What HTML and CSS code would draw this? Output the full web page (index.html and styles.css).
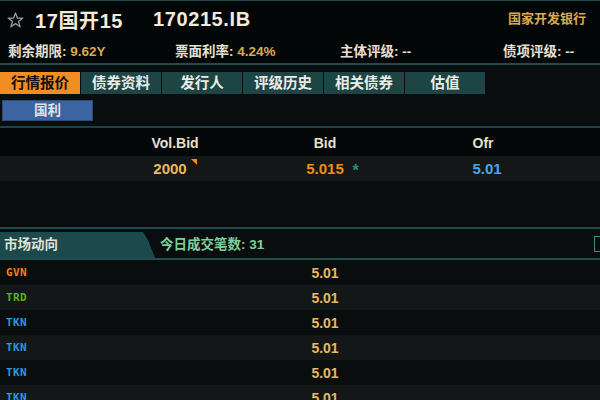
FILE: index.html
```html
<!DOCTYPE html>
<html lang="zh-CN">
<head>
    <meta charset="UTF-8">
    <title>17国开15</title>
    <link rel="stylesheet" href="styles.css">
</head>
<body>
    <div class="page">
        <!-- 债券信息头 -->
        <header class="bond-header">
            <div class="title-row">
                <svg class="star" width="17" height="16" viewBox="0 0 17 16">
                    <path d="M8.5 1 L10.4 6 L15.8 6.1 L11.5 9.4 L13.1 14.8 L8.5 11.6 L3.9 14.8 L5.5 9.4 L1.2 6.1 L6.6 6 Z" fill="none" stroke="#9a9a9a" stroke-width="1.3" stroke-linejoin="round"/>
                </svg>
                <span class="bond-name">17国开15</span>
                <span class="bond-code">170215.IB</span>
                <span class="issuer">国家开发银行</span>
            </div>
            <div class="info-row">
                <span class="info info-1">剩余期限: <b class="gold">9.62Y</b></span>
                <span class="info info-2">票面利率: <b class="gold">4.24%</b></span>
                <span class="info info-3">主体评级: --</span>
                <span class="info info-4">债项评级: --</span>
            </div>
        </header>

        <!-- 标签页 -->
        <nav class="tabs-area">
            <div class="tabs">
                <div class="tab active">行情报价</div>
                <div class="tab">债券资料</div>
                <div class="tab">发行人</div>
                <div class="tab">评级历史</div>
                <div class="tab">相关债券</div>
                <div class="tab">估值</div>
            </div>
            <div class="subtabs">
                <div class="subtab">国利</div>
            </div>
        </nav>

        <!-- 报价表 -->
        <section class="quote">
            <div class="quote-head">
                <span></span>
                <span class="col">Vol.Bid</span>
                <span class="col">Bid</span>
                <span class="col">Ofr</span>
            </div>
            <div class="quote-row">
                <span></span>
                <span class="col"><span class="vol">2000<i class="corner"></i></span></span>
                <span class="col"><span class="bid">5.015<i class="asterisk">*</i></span></span>
                <span class="col ofr">5.01</span>
            </div>
        </section>

        <!-- 市场动向 -->
        <section class="market">
            <div class="market-head">
                <div class="market-tab">市场动向</div>
                <div class="deal-count">今日成交笔数: 31</div>
                <div class="check"></div>
            </div>
            <div class="market-list" id="marketList"></div>
        </section>
    </div>

    <script>
        // 成交记录
        const trades = [
            { broker: "GVN", price: "5.01" },
            { broker: "TRD", price: "5.01" },
            { broker: "TKN", price: "5.01" },
            { broker: "TKN", price: "5.01" },
            { broker: "TKN", price: "5.01" },
            { broker: "TKN", price: "5.01" },
        ];

        const marketList = document.getElementById('marketList');
        trades.forEach(t => {
            const row = document.createElement('div');
            row.className = 'market-row';
            row.innerHTML = `
                <span class="broker broker-${t.broker.toLowerCase()}">${t.broker}</span>
                <span class="price">${t.price}</span>
            `;
            marketList.appendChild(row);
        });
    </script>
</body>
</html>
```

FILE: styles.css
```css
/* 基础 */
body {
    margin: 0;
    padding: 0;
    background-color: #0a0d0d;
    font-family: "Liberation Sans", "Noto Sans CJK SC", sans-serif;
    font-weight: bold;
    color: #e6e0d2;
}
.page {
    width: 600px;
    height: 400px;
    overflow: hidden;
}
.gold {
    color: #dca94e;
    font-weight: bold;
}
/* 头部 */
.bond-header {
    background-color: #030607;
    border-top: 1px solid #1f4b4b;
    border-bottom: 2px solid #1f4b4b;
    height: 62px;
}
.title-row {
    display: flex;
    align-items: center;
    height: 37px;
}
.star {
    margin-left: 7px;
    margin-right: 11px;
}
.bond-name {
    font-size: 20px;
    letter-spacing: 0.6px;
    color: #f4ead8;
    width: 118px;
}
.bond-code {
    font-size: 20px;
    letter-spacing: 0.6px;
    color: #f4ead8;
}
.issuer {
    margin-left: auto;
    margin-right: 14px;
    margin-top: -4px;
    font-size: 13px;
    color: #dca94e;
}
.info-row {
    display: flex;
    align-items: center;
    height: 24px;
    font-size: 13.5px;
}
.info-1 { margin-left: 8px; width: 167px; }
.info-2 { width: 165px; }
.info-3 { width: 163px; }
.info-4 { }
/* 标签页 */
.tabs-area {
    padding-top: 7px;
    height: 54px;
    border-bottom: 2px solid #1d4444;
}
.tabs {
    display: flex;
    gap: 1px;
}
.tab {
    width: 80px;
    height: 22px;
    line-height: 22px;
    text-align: center;
    background-color: #1d4545;
    color: #ecece4;
    font-size: 14.5px;
}
.tab.active {
    background-color: #f28d22;
    color: #111;
}
.subtabs {
    margin-top: 6px;
    padding-left: 2px;
}
.subtab {
    width: 89px;
    height: 19px;
    line-height: 19px;
    text-align: center;
    background-color: #3c64a0;
    border: 1px solid #2c4a78;
    color: #dfe2e8;
    font-size: 13.5px;
}
/* 报价表 */
.quote {
    height: 99px;
    border-bottom: 2px solid #1d4c4c;
}
.quote-head,
.quote-row {
    display: grid;
    grid-template-columns: 100px 150px 150px 166px 1fr;
    align-items: center;
}
.quote-head {
    height: 28px;
    padding-top: 2px;
    box-sizing: border-box;
    background-color: #040707;
    color: #e8e0cc;
    font-size: 14px;
}
.quote-row {
    height: 25px;
    background-color: #131717;
    font-size: 15px;
}
.col {
    text-align: center;
}
.vol,
.bid {
    position: relative;
}
.vol {
    color: #e8b862;
    margin-left: -10px;
}
.corner {
    position: absolute;
    right: -10px;
    top: -1px;
    width: 0;
    height: 0;
    border-top: 6px solid #f28d22;
    border-left: 6px solid transparent;
}
.bid {
    color: #f28c12;
}
.asterisk {
    position: absolute;
    right: -15px;
    top: 2px;
    font-style: normal;
    font-size: 16px;
    color: #2b8a78;
}
.ofr {
    color: #4aa8e6;
    padding-left: 8px;
}
/* 市场动向 */
.market-head {
    display: flex;
    align-items: stretch;
    height: 26px;
    margin-top: 3px;
    border-bottom: 2px solid #1d5050;
}
.market-tab {
    width: 155px;
    background-color: #1c4a4c;
    clip-path: polygon(0 0, 143px 0, 148px 8px, 155px 26px, 0 26px);
    color: #e2e2d4;
    font-size: 13.5px;
    line-height: 26px;
    padding-left: 4px;
    box-sizing: border-box;
}
.deal-count {
    margin-left: 5px;
    color: #7ccf9c;
    font-size: 13.5px;
    line-height: 26px;
}
.check {
    margin-left: auto;
    margin-top: 4px;
    margin-right: -10px;
    width: 14px;
    height: 14px;
    border: 1px solid #3e8a86;
}
.market-row {
    display: grid;
    grid-template-columns: 300px 50px;
    align-items: center;
    height: 25px;
}
.market-row:nth-child(even) {
    background-color: #131717;
}
.broker {
    padding-left: 6px;
    font-family: "DejaVu Sans Mono", monospace;
    font-size: 11px;
    font-weight: bold;
    letter-spacing: 0.4px;
}
.broker-gvn { color: #f0800e; }
.broker-trd { color: #5fae1e; }
.broker-tkn { color: #2a9ad8; }
.price {
    text-align: center;
    color: #e8b862;
    font-size: 14px;
}
```
